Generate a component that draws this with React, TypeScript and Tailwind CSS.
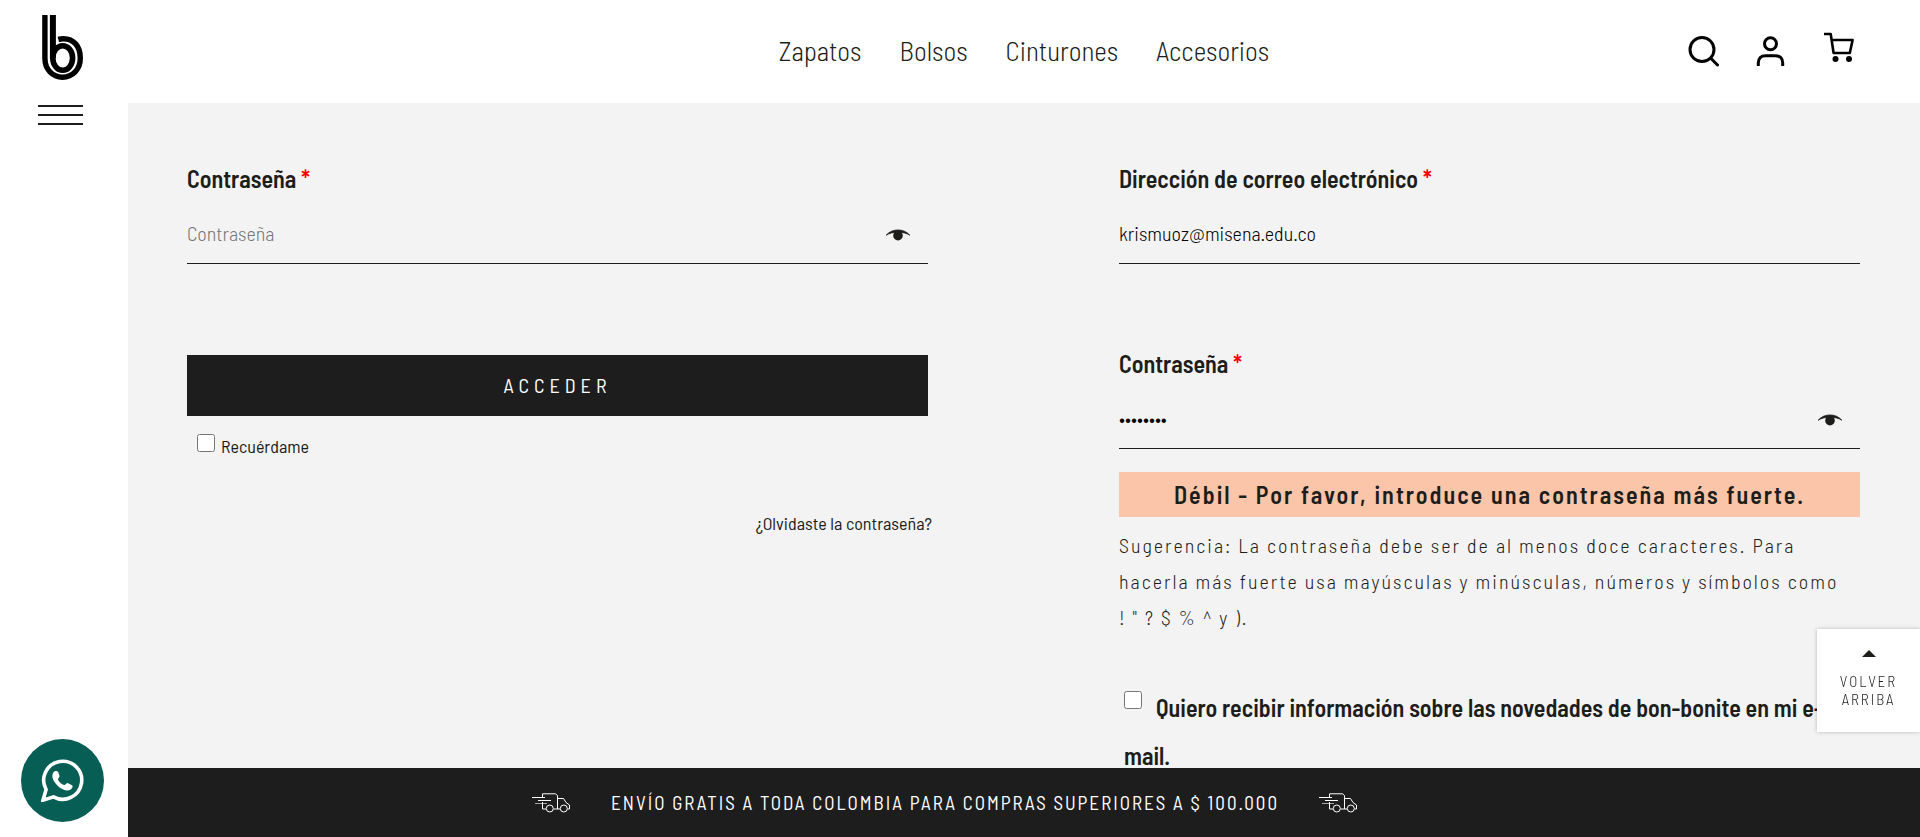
import React, { useState } from "react";

type FieldProps = {
  id: string;
  label: string;
  type: string;
  placeholder?: string;
  initial?: string;
};

const navItems = ["Zapatos", "Bolsos", "Cinturones", "Accesorios"];

function EyeIcon() {
  return (
    <svg className="h-4 w-7" viewBox="0 0 28 16" aria-hidden="true">
      <path d="M2.200 8.200C8 1.200 20 1.200 25.800 8.200C20 4.200 8 4.200 2.200 8.200Z" fill="#1d1d1b" stroke="#1d1d1b" strokeWidth="0.8" />
      <circle cx="14" cy="8.700" r="4.800" fill="#1d1d1b" />
    </svg>
  );
}

function Field({ id, label, type, placeholder, initial = "" }: FieldProps) {
  const [value, setValue] = useState(initial);
  const [visible, setVisible] = useState(false);
  const isPassword = type === "password";
  return (
    <div>
      <label htmlFor={id} className="block text-[24px] leading-[30px] font-semibold">
        {label} <span className="text-[#ff0000]">*</span>
      </label>
      <div className="mt-3 flex h-[58px] items-center border-b border-[#1d1d1b]">
        <input
          id={id}
          type={isPassword && visible ? "text" : type}
          value={value}
          placeholder={placeholder}
          onChange={(e) => setValue(e.target.value)}
          className="h-full min-w-0 flex-1 bg-transparent pb-1 text-[20px] font-light text-black outline-none placeholder:text-[#757575]"
        />
        {isPassword && (
          <button
            type="button"
            aria-label="Mostrar contraseña"
            onClick={() => setVisible(!visible)}
            className="mr-4"
          >
            <EyeIcon />
          </button>
        )}
      </div>
    </div>
  );
}

function Logo() {
  return (
    <svg className="h-[66px] w-[42px]" viewBox="0 0 42 66" fill="none" stroke="#000" aria-hidden="true">
      <path d="M2.900 0V43C2.900 54.500 10.500 62.200 20.500 62.200C30.500 62.200 38.300 54.500 38.300 43C38.300 31 31.500 23.700 21.500 23.700C19.500 23.700 18 23.900 16.300 24.400" strokeWidth="5.400" />
      <path d="M10.900 0V43" strokeWidth="6" />
      <ellipse cx="20.700" cy="43" rx="9.900" ry="12.300" strokeWidth="5.600" />
    </svg>
  );
}

function SearchIcon() {
  return (
    <svg className="size-8" viewBox="0 0 32 32" fill="none" stroke="#000" strokeWidth="3" aria-hidden="true">
      <circle cx="15" cy="14.500" r="12" />
      <path d="M24 23.500L30.500 30" strokeLinecap="round" />
    </svg>
  );
}

function UserIcon() {
  return (
    <svg className="size-8" viewBox="0 0 32 32" fill="none" stroke="#000" strokeWidth="3" aria-hidden="true">
      <circle cx="15.500" cy="8.700" r="6" />
      <path d="M3.300 31V28C3.300 23.500 6 20.700 10.500 20.700H20.500C25 20.700 27.700 23.500 27.700 28V31" />
    </svg>
  );
}

function CartIcon() {
  return (
    <svg className="size-8" viewBox="0 0 32 32" fill="none" stroke="#000" strokeWidth="2.600" strokeLinejoin="round" aria-hidden="true">
      <path d="M1 3H7.700L10.600 22H26.800L29.600 9H9" />
      <circle cx="12.500" cy="28" r="3" fill="#000" stroke="none" />
      <circle cx="26" cy="28" r="3" fill="#000" stroke="none" />
    </svg>
  );
}

function TruckIcon() {
  return (
    <svg className="h-5 w-[39px]" viewBox="0 0 39 20" fill="none" stroke="#fff" aria-hidden="true">
      <path d="M10.500 5V0.800H23.500L25.500 2.500V16M25.500 5.500H31.500L34 9.500L37.500 12V16H35.500" />
      <path d="M10.500 9V16H14M21.500 16H28" />
      <circle cx="17.800" cy="15.500" r="3.500" />
      <circle cx="31.800" cy="15.500" r="3.500" />
      <path d="M0 4.500H13M6 7.500H19" />
      <path d="M3 10.500H15" strokeOpacity="0.6" />
    </svg>
  );
}

function WhatsAppIcon() {
  return (
    <svg className="size-[43px]" viewBox="0 0 43 43" fill="none" aria-hidden="true">
      <path d="M2 41.200L5.100 30.500A19 19 0 1 1 12.500 37.900Z" stroke="#fff" strokeWidth="3.600" />
      <path d="M12.300 13.400C13.500 11.600 16.200 11.300 17.100 13.100L18.500 16.500C19.100 18 16.700 19.500 17 20.700C18.300 23.300 20.500 25.200 23.100 26.100C24.300 26.400 25.800 23.600 27.100 24.200L31 26.200C32.500 27.100 31.200 29.500 29.600 30.600C26.300 32.600 21.700 30.700 18.300 28.200C15.500 26 12.200 22 11.500 18.600C11.200 16.500 11.500 14.600 12.300 13.400Z" fill="#fff" />
    </svg>
  );
}

export default function App() {
  return (
    <div className="flex h-screen overflow-hidden bg-white font-['Barlow_Semi_Condensed','Roboto_Condensed',sans-serif] text-[#1d1d1b]">
      <aside className="flex w-32 shrink-0 flex-col justify-between pb-[15px]">
        <div className="flex flex-col items-start pt-[15px] pl-[38px]">
          <a href="#" aria-label="Bon-bonite" className="ml-1">
            <Logo />
          </a>
          <button type="button" aria-label="Menú" className="mt-6 flex flex-col gap-[7px]">
            <span className="h-0.5 w-[45px] bg-[#1d1d1b]" />
            <span className="h-0.5 w-[45px] bg-[#1d1d1b]" />
            <span className="h-0.5 w-[45px] bg-[#1d1d1b]" />
          </button>
        </div>
        <a href="#" aria-label="WhatsApp" className="ml-[21px] flex size-[83px] items-center justify-center rounded-full bg-[#075e54]">
          <WhatsAppIcon />
        </a>
      </aside>

      <div className="flex min-w-0 flex-1 flex-col">
        <header className="grid h-[103px] shrink-0 grid-cols-[1fr_auto_1fr] items-center pb-0.5">
          <nav className="col-start-2 flex gap-[38px] pb-0.5 text-[27px] leading-9 font-light">
            {navItems.map((item) => (
              <a key={item} href="#">{item}</a>
            ))}
          </nav>
          <div className="flex items-center justify-end gap-9 pr-[65px]">
            <button type="button" aria-label="Buscar"><SearchIcon /></button>
            <button type="button" aria-label="Mi cuenta"><UserIcon /></button>
            <button type="button" aria-label="Carrito" className="pb-2"><CartIcon /></button>
          </div>
        </header>

        <main className="grid min-h-0 flex-1 grid-cols-2 gap-[191px] overflow-hidden bg-[#f3f3f3] pt-[61px] pr-[60px] pl-[59px]">
          <form onSubmit={(e) => e.preventDefault()}>
            <Field id="login-password" label="Contraseña" type="password" placeholder="Contraseña" />
            <button type="submit" className="mt-[91px] h-[61px] w-full bg-[#1d1d1d] pb-0.5 text-[20px] tracking-[5px] text-white">
              ACCEDER
            </button>
            <div className="mt-[18px] flex items-start gap-1.5 pl-2.5">
              <input id="remember" type="checkbox" className="size-[18px]" />
              <label htmlFor="remember" className="text-[18px] leading-6">Recuérdame</label>
            </div>
            <div className="-mr-1 mt-[53px] text-right text-[18px] leading-6">
              <a href="#">¿Olvidaste la contraseña?</a>
            </div>
          </form>

          <form onSubmit={(e) => e.preventDefault()}>
            <Field id="register-email" label="Dirección de correo electrónico" type="email" initial="krismuoz@misena.edu.co" />
            <div className="mt-[85px]">
              <Field id="register-password" label="Contraseña" type="password" initial="12345678" />
            </div>
            <p className="mt-[23px] bg-[#fbc5a9] text-center text-[24px] leading-[45px] font-semibold tracking-[2px]">
              Débil - Por favor, introduce una contraseña más fuerte.
            </p>
            <p className="mt-2.5 text-[20px] leading-9 font-light tracking-[2px]">
              Sugerencia: La contraseña debe ser de al menos doce caracteres. Para hacerla más fuerte usa mayúsculas y minúsculas, números y símbolos como{" "}
              <span className="whitespace-nowrap">! " ? $ % ^ y ).</span>
            </p>
            <label className="mt-[49px] block px-[5px] text-[24px] leading-[48px] font-semibold">
              <input type="checkbox" className="mr-3.5 size-[18px] align-[8px]" />
              Quiero recibir información sobre las novedades de bon-bonite en mi e-mail.
            </label>
          </form>
        </main>

        <footer className="flex h-[69px] shrink-0 items-center justify-center gap-10 bg-[#1d1d1d] pr-[158px] text-[19px] tracking-[2px] text-white">
          <TruckIcon />
          <span className="pt-0.5">ENVÍO GRATIS A TODA COLOMBIA PARA COMPRAS SUPERIORES A $ 100.000</span>
          <TruckIcon />
        </footer>
      </div>

      <a
        href="#"
        className="fixed right-0 bottom-[105px] flex h-[103px] w-[103px] flex-col items-center bg-white pt-[21px] text-center text-[15px] leading-[18px] font-light tracking-[2px] shadow-[0_0_4px_rgba(0,0,0,0.25)]"
      >
        <svg className="mb-[15px] h-[7px] w-3.5" viewBox="0 0 14 7" aria-hidden="true">
          <path d="M0 7L7 0L14 7Z" fill="#1d1d1b" />
        </svg>
        VOLVER
        <br />
        ARRIBA
      </a>
    </div>
  );
}
